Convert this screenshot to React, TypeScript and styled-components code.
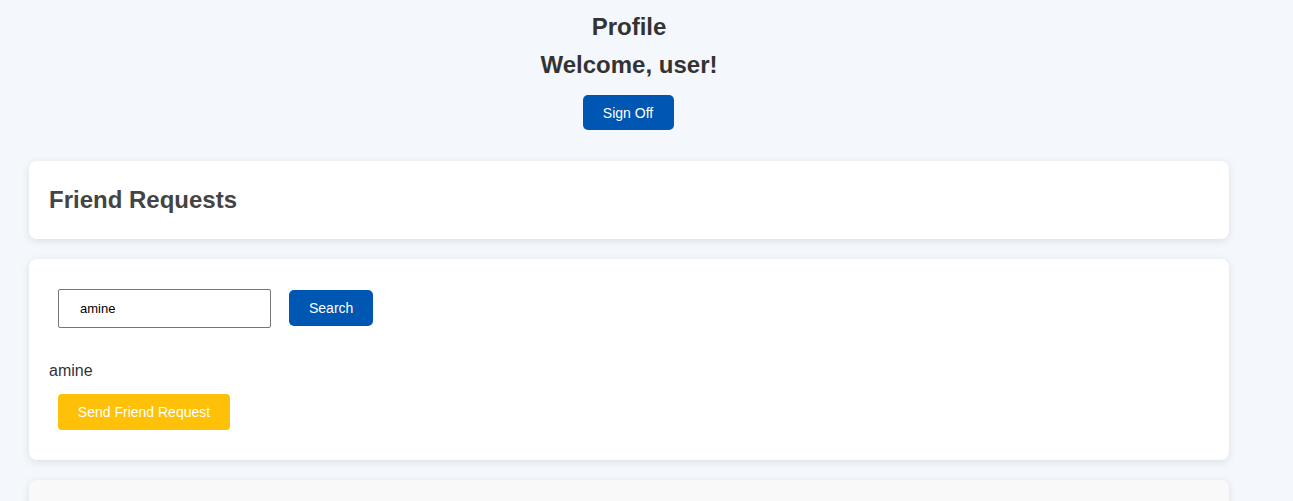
import React from "react";
import styled, { createGlobalStyle } from "styled-components";

const GlobalStyle = createGlobalStyle`
  html, body {
    margin: 0;
    padding: 0;
    background: #f4f7fb;
    font-family: "Liberation Sans", Arial, sans-serif;
    color: #333;
  }
`;

const Page = styled.div`
  width: 1200px;
  margin-left: 29px;
  display: flex;
  flex-direction: column;
`;

const Header = styled.header`
  display: flex;
  flex-direction: column;
  align-items: center;
  padding-top: 13px;
`;

const Title = styled.h1`
  margin: 0;
  font-size: 24px;
  line-height: 28px;
  font-weight: 700;
  color: #333;
`;

const Welcome = styled.h2`
  margin: 10px 0 0;
  font-size: 24px;
  line-height: 28px;
  font-weight: 700;
  color: #333;
`;

const Button = styled.button<{ $variant?: "primary" | "warning" }>`
  border: none;
  border-radius: 5px;
  height: 36px;
  padding: 0 20px;
  font-family: "Liberation Sans", Arial, sans-serif;
  font-size: 14px;
  color: #fff;
  cursor: pointer;
  background: ${(p) => (p.$variant === "warning" ? "#ffc107" : "#0056b3")};
`;

const SignOff = styled(Button)`
  margin-top: 16px;
  margin-right: 2px;
  height: 35px;
  width: 91px;
  padding: 0;
`;

const Card = styled.section<{ $muted?: boolean }>`
  background: ${(p) => (p.$muted ? "#f9f9f9" : "#fff")};
  border-radius: 8px;
  box-shadow: 0 2px 8px rgba(0, 0, 0, 0.1);
  padding: 20px;
  margin-top: 20px;
`;

const FirstCard = styled(Card)`
  margin-top: 31px;
`;

const CardTitle = styled.h2`
  margin: 0;
  font-size: 24px;
  line-height: 38px;
  font-weight: 700;
  color: #444;
`;

const SearchRow = styled.div`
  display: flex;
  align-items: flex-start;
  gap: 18px;
  padding: 10px 9px;
`;

const SearchInput = styled.input`
  box-sizing: border-box;
  width: 213px;
  height: 39px;
  border: 1px solid #767676;
  border-radius: 2px;
  padding: 0 21px;
  font-family: "Liberation Sans", Arial, sans-serif;
  font-size: 13px;
  color: #000;
  background: #fff;
`;

const SearchButton = styled(Button)`
  margin-top: 1px;
`;

const ResultName = styled.p`
  margin: 24px 0 0;
  font-size: 16px;
  line-height: 18px;
  color: #333;
`;

const ResultActions = styled.div`
  display: flex;
  padding: 14px 9px 10px;
`;

const SendButton = styled(Button)`
  width: 172px;
  padding: 0;
  border-radius: 4px;
`;

const Placeholder = styled(Card)`
  height: 80px;
`;

export default function App() {
  return (
    <>
      <GlobalStyle />
      <Page>
        <Header>
          <Title>Profile</Title>
          <Welcome>Welcome, user!</Welcome>
          <SignOff>Sign Off</SignOff>
        </Header>
        <FirstCard>
          <CardTitle>Friend Requests</CardTitle>
        </FirstCard>
        <Card>
          <SearchRow>
            <SearchInput defaultValue="amine" />
            <SearchButton>Search</SearchButton>
          </SearchRow>
          <ResultName>amine</ResultName>
          <ResultActions>
            <SendButton $variant="warning">Send Friend Request</SendButton>
          </ResultActions>
        </Card>
        <Placeholder $muted />
      </Page>
    </>
  );
}
